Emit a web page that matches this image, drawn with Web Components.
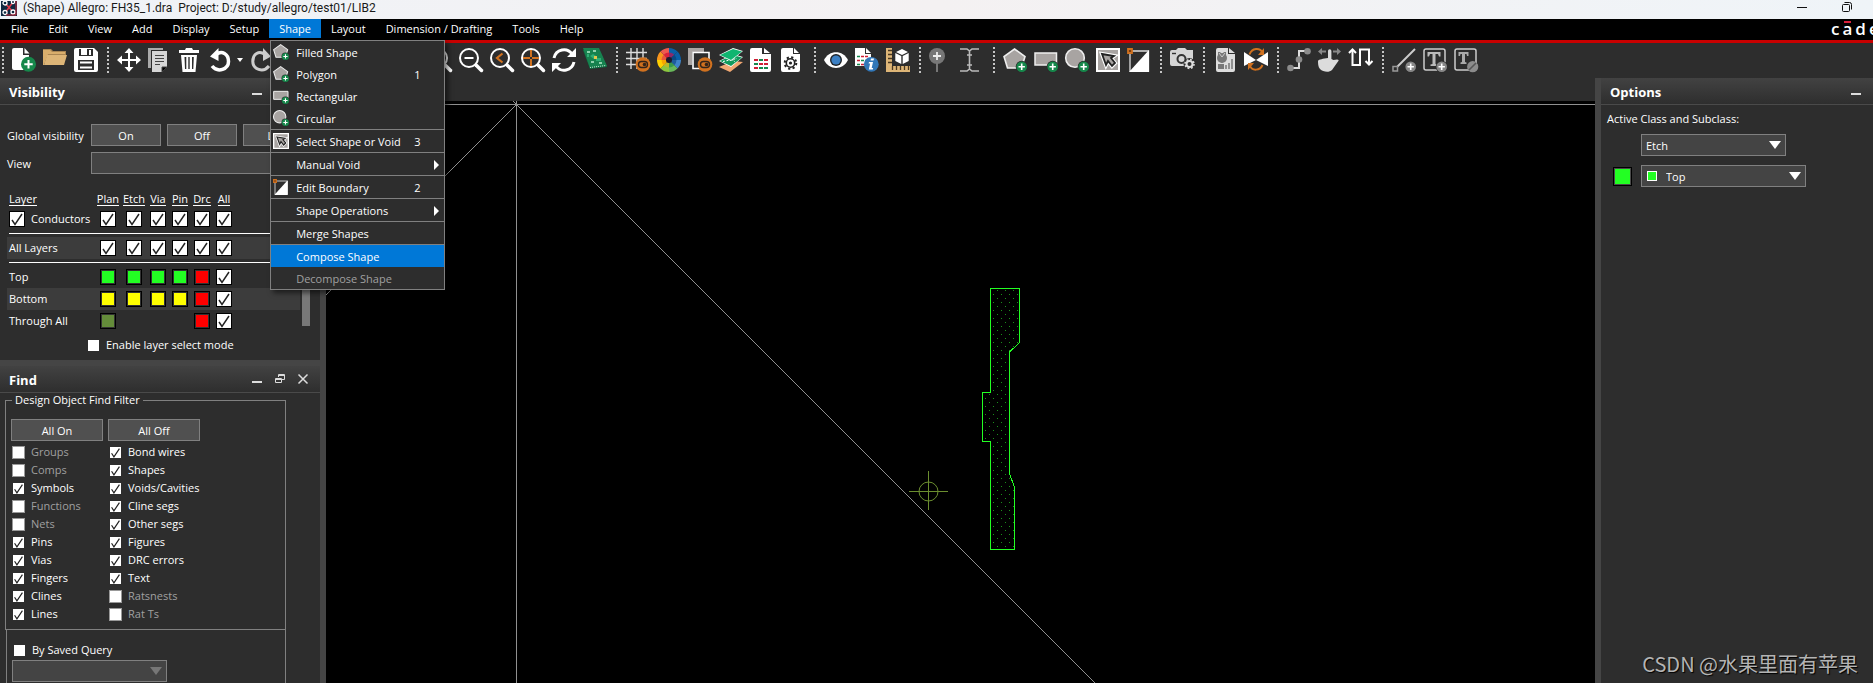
<!DOCTYPE html>
<html lang="en">
<head>
<meta charset="utf-8">
<title>Allegro</title>
<style>
html,body{height:100%;margin:0}
body{background:#2d2d2d;color:#fff;font:11px/16px "Open Sans","Noto Sans",sans-serif;overflow:hidden}
</style>
</head>
<body>
<allegro-app></allegro-app>
<script>
const plus=(c='#16884b')=>`<circle cx="18.7" cy="18.7" r="6" fill="#2d2d2d"/><circle cx="18.7" cy="18.7" r="5.3" fill="${c}"/><path d="M18.7 15.5v6.4M15.5 18.7h6.4" stroke="#fff" stroke-width="1.6"/>`;
const lens='<circle cx="10" cy="10" r="9" fill="none" stroke="#fff" stroke-width="2"/><path d="M17 17l5.500 5.500" stroke="#fff" stroke-width="3.500" stroke-linecap="round"/>';
const toggle='<circle cx="17" cy="16.500" r="7.300" fill="#d0711f"/><rect x="12.500" y="13.500" width="9" height="6" rx="3" fill="none" stroke="#33241a" stroke-width="1.400"/><circle cx="18.500" cy="16.500" r="1.800" fill="#33241a"/>';
const sector=(a,c,r1=5,r2=12)=>{const p=(r,d)=>{const t=d*Math.PI/180;return (12+r*Math.cos(t)).toFixed(2)+' '+(12+r*Math.sin(t)).toFixed(2)};
  return `<path fill="${c}" d="M${p(r1,a)}L${p(r2,a)}A${r2} ${r2} 0 0 1 ${p(r2,a+45)}L${p(r1,a+45)}A${r1} ${r1} 0 0 0 ${p(r1,a)}z"/>`};
const wheel=['#3f84c8','#69b85a','#8cc63f','#ffcf00','#f7941d','#ed5a4f','#0a5fa8','#0a5fa8'];
const wheelIn=['#1f5c9c','#3a9a4a','#b8b82e','#f7a600','#e8563a','#d8203c','#8a2a6a','#0a4a86'];
const ICONS={
new:'<path fill="#fff" d="M2 0h9v7h6v15H2a2 2 0 0 1-2-2V2a2 2 0 0 1 2-2z"/><path fill="#fff" d="M12.500 0l5 5.500h-5z"/><circle cx="16.500" cy="16.200" r="7.500" fill="#16884b"/><path d="M16.500 12v8.400M12.300 16.200h8.400" stroke="#fff" stroke-width="2"/>',
open:'<path fill="#a98552" d="M0 1h8l2 2h13v5H0z"/><path fill="#d9ae6c" d="M0 2h7l2 2h13v2H5L1 17H0z"/><path fill="#ddb577" d="M4 7h20l-3 10H1z"/>',
save:'<path fill="#fff" fill-rule="evenodd" d="M2 0h18l4 4v18a2 2 0 0 1-2 2H2a2 2 0 0 1-2-2V2a2 2 0 0 1 2-2zM5 1v7h14V1zM4 12v10h16V12z"/><path fill="#fff" d="M7 1h6v6H7z"/><path stroke="#fff" stroke-width="2" d="M6 14.500h12M6 19.500h12"/><path fill="#fff" d="M15 2h2v5h-2z"/>',
move:'<path stroke="#fff" stroke-width="2" d="M12 3v18M3 12h18"/><path fill="#fff" d="M12 0l4.500 5h-9zM12 24l4.500-5h-9zM0 12l5-4.500v9zM24 12l-5-4.500v9z"/>',
copy:'<path fill="#aaa" d="M0 0h15v2H3v18H0z"/><path fill="#d6d6d6" d="M4 3h15v16l-5 5H4z"/><path stroke="#444" d="M7 7.500h9M7 10.500h9M7 13.500h9M7 16.500h5M14 24v-5h5"/>',
trash:'<path fill="#fff" fill-rule="evenodd" d="M7 0h6l1 2h6v3H0V2h6zM2 7h16l-1.500 17h-13zM5.500 9l.5 12h1.300V9zM9.300 9v12h1.400V9zM13 9v12h1.300l.5-12z"/>',
undo:'<path d="M6 6.500C12 2 18.500 6 18.500 13.500S8 25.500 2 18" fill="none" stroke="#fff" stroke-width="3.500"/><path fill="#fff" d="M0 8.500L8.500 0v13z"/>',
redo:'<path d="M14 6.500C8 2 1.800 6 1.800 13.500S12 25.500 18 18" fill="none" stroke="#ccc" stroke-width="3"/><path fill="#ccc" d="M20 8.500L12 0v13z"/>',
zoomin:lens+'<path stroke="#fff" stroke-width="2" d="M5.500 10h9M10 5.500v9"/>',
zoomfit:lens+'<path stroke="#fff" fill="none" stroke-width="2" d="M6 7h8v6H6z"/>',
zoomout:lens+'<path stroke="#fff" stroke-width="2" d="M5.500 10h9"/>',
zoomprev:lens+'<path stroke="#d0711f" stroke-width="2.200" fill="none" d="M12.500 5.500L7 10l5.500 4.500"/>',
zoomcenter:lens+'<path stroke="#d0711f" stroke-width="2" d="M10 2v7M10 11v7M2 10h7M11 10h7"/>',
refresh:'<path fill="none" stroke="#fff" stroke-width="3" d="M2 10C4 1 15-1 20 6M22 14c-2 9-13 11-18 4"/><path fill="#fff" d="M24 0v9h-9zM0 24v-9h9z"/>',
board:'<path fill="#0f6b41" d="M0 2l16-1 8 18-17 2z"/><path fill="#17824f" d="M0 0h16l8 18-17 2z"/><path fill="#8fd0ac" d="M4 3h3v2H4zM10 2h3v2h-3zM8 13h3v2H8zM16 14h3v2h-3z"/><path fill="#2fae74" d="M7 8l3-2 3 2-2 3zM13 10h5v3h-5zM4 6h2v3H4z"/><path fill="#e5c64b" d="M11 8h3v3h-3z"/><path stroke="#c8e8d8" stroke-dasharray="1 1" d="M7 19.500l16-2"/>',
grid:'<path stroke="#ddd" stroke-width="1.400" d="M5 0v21M11 0v21M17 0v10M0 4.500h21M0 10.500h21M0 16.500h11"/>'+toggle,
colors:wheel.map((c,i)=>sector(i*45,c)).join('')+wheelIn.map((c,i)=>sector(i*45,c,2.5,7.5)).join('')+'<circle cx="12" cy="12" r="3" fill="#1c1c2c"/>',
shadow:'<path fill="#aaa5a3" d="M0 0h16v4H4v13H0z"/><path fill="none" stroke="#fff" stroke-width="1.600" d="M5 4.500h16v16H5z"/>'+toggle,
layers:'<path fill="#f1a873" d="M0 19l14-6 10 1-13 10z"/><path fill="#fff" d="M0 13l14-7 10 3-12 10z"/><path fill="#109a5c" d="M1 13l13-6 9 2.500-11 8.500z"/><path stroke="#fff" stroke-dasharray="2 1.500" d="M4 13.500l14-3M10 9l6 5"/><path fill="#fff" d="M0 7l14-7 10 3-12 10z"/><path fill="#10b570" d="M1 7l13-6 9 2.500L12 12z"/>',
report:'<path fill="#fff" d="M2 0h10v6h9v16a2 2 0 0 1-2 2H2a2 2 0 0 1-2-2V2a2 2 0 0 1 2-2z"/><path fill="#fff" d="M14 0l6 5h-6z"/><path stroke="#ce1e34" stroke-width="2.200" stroke-dasharray="4 1" d="M4 12h4M14 12h4M9 16h9M4 20h4"/><path stroke="#14894d" stroke-width="2.200" stroke-dasharray="4 1" d="M9 12h4M4 16h4M9 20h9"/>',
docgear:'<path fill="#fff" d="M2 0h10v6h7v16a2 2 0 0 1-2 2H2a2 2 0 0 1-2-2V2a2 2 0 0 1 2-2z"/><path fill="#fff" d="M13 0l5 5h-5z"/><circle cx="9.500" cy="15" r="4.200" fill="none" stroke="#222" stroke-width="1.600"/><circle cx="9.500" cy="15" r="5.800" fill="none" stroke="#222" stroke-width="2" stroke-dasharray="2.200 2.350"/><circle cx="9.500" cy="15" r="1.600" fill="#222"/>',
eye:'<path fill="#fff" d="M0 12C5 1.500 19 1.500 24 12 19 22.500 5 22.500 0 12z"/><circle cx="12" cy="12" r="6" fill="#202428"/><circle cx="12" cy="12" r="4.600" fill="#3c80c4"/>',
info:'<path fill="#fff" d="M0 0h10v6h6v12H0z"/><path fill="#fff" d="M11 0l5 5h-5z"/><path stroke="#14894d" stroke-width="1.500" stroke-dasharray="3 1" d="M2 8.500h3M6 12.500h8M2 16.500h3"/><path stroke="#ce1e34" stroke-width="1.500" stroke-dasharray="3 1" d="M6 8.500h7M2 12.500h3M6 16.500h3"/><circle cx="16.300" cy="16.300" r="7.400" fill="#3177b8"/><path fill="#fff" d="M16 10.500h3l-.5 2h-3zM14 14h4l-1.300 6h1.500l-.4 1.500h-4l1.300-6h-1.500z"/>',
ruler:'<path fill="#ddb577" d="M0 0h6v18h18v6H0z"/><path stroke="#4a3820" stroke-width="1.300" d="M2 2.500h4M2 6.500h4M2 10.500h4M2 14.500h4M6.500 18v4M10.500 18v4M14.500 18v4M18.500 18v4M22.500 18v4"/><path fill="#fff" d="M16 1l6 3-6 3-6-3zM9.300 5l6 3v8l-6-3zM22.700 5v8l-6 3V8z"/>',
pin:'<circle cx="8" cy="8" r="8" fill="#777"/><path stroke="#777" stroke-width="2" d="M8 14v10"/><path stroke="#eee" stroke-width="1.800" d="M8 4v8M4 8h8"/>',
ibeam:'<path fill="none" stroke="#bbb" stroke-width="1.600" d="M0 1h7l2.500 2L12 1h7M9.500 3v18M0 23h7l2.500-2 2.500 2h7M7 7h5M7 17h5"/>',
polygon:'<path fill="#a8a4a2" stroke="#eee" stroke-width="1.600" d="M11.500 1L22 8.500 18.500 20H4.500L1 8.500z"/>'+plus(),
rect:'<path fill="#a8a4a2" stroke="#eee" stroke-width="1.500" d="M1 5h21.500v12H1z"/>'+plus(),
circle:'<circle cx="10" cy="10" r="9.300" fill="#a8a4a2" stroke="#eee" stroke-width="1.600"/>'+plus(),
select:'<path fill="#a8a4a2" stroke="#fff" stroke-width="2" d="M1 1h22v22H1z"/><path fill="#a8a4a2" stroke="#fff" stroke-width="4" d="M6 6l12 2-3 2 4 5-3 3-4-5-2 4z"/><path fill="#a8a4a2" stroke="#222" stroke-width="1.800" d="M6 6l12 2-3 2 4 5-3 3-4-5-2 4z"/>',
edit:'<path fill="none" stroke="#ddd" stroke-width="1.300" d="M3 3h18.500v20H3z"/><path fill="#fff" d="M22 2v22H2z"/><path fill="#7a3c10" stroke="#d0711f" stroke-width="1.800" d="M1 1h4v4H1z"/>',
camera:'<path fill="#d5d5d5" d="M6 2l2-2h7l2 2h6v16H2a2 2 0 0 1-2-2V4a2 2 0 0 1 2-2z"/><path stroke="#333" stroke-width="1.400" d="M2 5.500h4"/><circle cx="11.500" cy="11" r="4" fill="none" stroke="#333" stroke-width="2"/><circle cx="19.500" cy="16" r="6" fill="#2d2d2d"/><circle cx="19.500" cy="16" r="3" fill="none" stroke="#ddd" stroke-width="2"/><circle cx="19.500" cy="16" r="4.500" fill="none" stroke="#ddd" stroke-width="1.600" stroke-dasharray="1.800 1.730"/>',
chart:'<path fill="#ddd" d="M5 0h10v6h7v16a2 2 0 0 1-2 2H5a2 2 0 0 1-2-2V2a2 2 0 0 1 2-2zM16 0l6 5h-6z"/><path fill="#777" d="M5 4h2l2 2 2-2h2v7l-4 4-4-4z"/><circle cx="9" cy="10" r="5" fill="#777"/><path fill="#777" d="M5 16h6v5H5z"/><path stroke="#777" stroke-width="1.500" d="M13 21v-4M16 21v-6M19 21V11"/><path fill="none" stroke="#ccc" d="M6 5l3 4 3-4"/>',
flip:'<path fill="#fff" d="M0 4l12 8L0 18zM24 4l-12 8 12 6z"/><path fill="none" stroke="#d0711f" stroke-width="2" d="M5.500 6.500C8-.5 16-.5 18.500 4.500M18.500 17C16 23 8 23 6 18"/><path fill="#d0711f" d="M20 0v7h-6zM4 22v-7h6z"/>',
route:'<path fill="none" stroke="#ddd" stroke-width="2" d="M3 20h9V3h9"/><g fill="#8c8c8c"><circle cx="3.500" cy="20" r="3.300"/><circle cx="12" cy="11.500" r="3.300"/><circle cx="20.500" cy="3.300" r="3.300"/></g>',
hand:'<path fill="#dcdcdc" d="M10 3a1.700 1.700 0 0 1 3.400 0v8l2 1 3.600-.500c2 0 2 1 1 2L14 22c-3 3-9 2-12-1-2-2-2-6-2-8 1-2 5-2 10-3z"/><path fill="#888" d="M0 3.500L4 0v2.500h4v2H4V7zM23 3.500L19 0v2.500h-4v2h4V7z"/>',
snake:'<path fill="none" stroke="#fff" stroke-width="2" d="M3.500 2v15H11V1.500h9V16"/><path fill="none" stroke="#fff" stroke-width="2" d="M0 5l3.500-3.500L7 5M16.500 13l3.500 3.500 3.500-3.500"/>',
line:'<path stroke="#ccc" stroke-width="2" d="M4 20L23 1"/><path fill="#2d2d2d" stroke="#999" stroke-width="1.500" d="M1 18.500h4.500V23H1z"/>'+plus('#888'),
text:'<rect x="1" y="1" width="21" height="21" rx="2" fill="none" stroke="#ccc" stroke-width="1.500"/><path fill="#bbb" d="M4.500 4h13v4.500H16L15 6h-2.500v10l2 .500V18h-7v-1.500l2-.500V6H7L6 8.500H4.500z"/>'+plus('#888'),
textedit:'<rect x="1" y="1" width="21" height="21" rx="2" fill="none" stroke="#ccc" stroke-width="1.500"/><path fill="#aaa" d="M4.500 4h10v4H13l-.500-2H11v8l1.500.500V16h-6v-1.500L8 14V6H6.500L6 8H4.500z"/><circle cx="18.700" cy="18.700" r="5.600" fill="#8c8c8c"/><path stroke="#555" stroke-width="1.600" d="M15 22l7-7"/>'
};
const CHECK=`url("data:image/svg+xml,%3Csvg xmlns='http://www.w3.org/2000/svg' viewBox='0 0 14 14'%3E%3Cpath d='M2 8l3 4.500L12 2' fill='none' stroke='%23222' stroke-width='1.5'/%3E%3C/svg%3E")`;
const RESET=`*{box-sizing:border-box}button,select,input{font:inherit;color:inherit;margin:0;padding:0;border:0;border-radius:0;background:none;appearance:none}
input[type=checkbox]{display:block;flex:none;width:11px;height:11px;background:#fff}
input[type=checkbox]:checked{background:#fff ${CHECK} center/11px no-repeat}`;

class Part extends HTMLElement{
  connectedCallback(){
    if(this.shadowRoot)return;
    const t=document.createElement('template');
    t.innerHTML=`<style>${RESET}${this.css()}</style>${this.html()}`;
    this.attachShadow({mode:'open'}).append(document.importNode(t.content,true));
  }
  css(){return ''}
  attr(n){return this.getAttribute(n)||''}
}
const define=(name,css,html)=>customElements.define(name,class extends Part{
  css(){return css}
  html(){return typeof html==='function'?html(this):html}
});

define('ui-icon',':host{display:block;width:var(--icon,24px);height:var(--icon,24px)}svg{display:block;width:100%;height:100%;overflow:visible}',
  e=>`<svg viewBox="0 0 24 24" aria-hidden="true">${ICONS[e.attr('name')]}</svg>`);

define('tool-button',`:host{display:block;flex:none}button{display:flex;align-items:center;width:24px;height:24px}
  :host([menu]) button{width:34px;gap:3px}i{border:3px solid transparent;border-top:4px solid #fff;border-bottom:0}ui-icon{flex:none}`,
  e=>`<button aria-label="${e.attr('name')}"><ui-icon name="${e.attr('name')}"></ui-icon>${e.hasAttribute('menu')?'<i></i>':''}</button>`);

define('tool-grip',':host{display:flex;justify-content:center;width:5px;height:26px;flex:none}i{width:2px;background:repeating-linear-gradient(#c4c4c4 0 2px,transparent 2px 4px)}','<i></i>');

const TOOLS=['new open save','move copy trash undo* redo*','zoomin zoomfit zoomin zoomfit zoomin zoomout zoomprev zoomcenter refresh board','grid colors shadow layers report docgear','eye info ruler','pin ibeam','polygon rect circle select edit','camera','chart flip','route hand snake','line text textedit'];
define('tool-bar',':host{display:flex;align-items:center;gap:7px;height:35px;padding-bottom:1px;background:#2d2d2d;overflow:hidden}',
  ()=>TOOLS.map(g=>'<tool-grip></tool-grip>'+g.split(' ').map(n=>`<tool-button name="${n.replace('*','')}"${n.endsWith('*')?' menu':''}></tool-button>`).join('')).join(''));

define('title-bar',`:host{display:flex;align-items:center;height:19px;overflow:hidden;background:linear-gradient(90deg,#eff3f8,#f4f1f2 50%,#eff4f8);color:#1a1a1a;font:12px/16px Roboto,"Open Sans",sans-serif;padding:0 20px 0 1px}
  svg{display:block;flex:none}.t{flex:1;margin:0 0 3px 6px;white-space:pre}.w{display:flex;gap:33px;margin-bottom:5px}`,
  `<svg width="16" height="18" viewBox="0 0 16 18"><rect y="-2" width="16" height="17" fill="#0d2740"/><path d="M4 2l8 9M12 1L4 12" stroke="#e03a4a" stroke-width="1.500"/><g fill="#0d2740" stroke="#fff" stroke-width="1.300"><circle cx="4" cy="2" r="2"/><circle cx="12" cy="1" r="1.600"/><circle cx="4" cy="11.500" r="2"/><circle cx="12" cy="11" r="2"/></g><path d="M15 0v14H5" fill="none" stroke="#d02a3a"/></svg>
  <span class="t">(Shape) Allegro: FH35_1.dra  Project: D:/study/allegro/test01/LIB2</span>
  <span class="w"><button aria-label="Minimize"><svg width="12" height="12"><path d="M1 6.500h10" stroke="#111"/></svg></button>
  <button aria-label="Restore"><svg width="12" height="12" fill="none" stroke="#111"><rect x="1.500" y="3.500" width="7" height="7" rx="1"/><path d="M3.500 1.500h5a2 2 0 0 1 2 2v5"/></svg></button></span>`);

const MENU=[['Filled Shape','polygon'],['Polygon','polygon','1'],['Rectangular','rect'],['Circular','circle'],0,['Select Shape or Void','select','3'],0,['Manual Void','','>'],0,['Edit Boundary','edit','2'],0,['Shape Operations','','>'],0,['Merge Shapes'],0,['Compose Shape','','','on'],['Decompose Shape','','','off']];
define('menu-popup',`:host{display:block;width:175px;background:#2d2d2d;border:1px solid #808080;box-shadow:3px 3px 5px #0008;--icon:16px}
  button{display:grid;grid-template-columns:16px 1fr 14px 16px;align-items:center;width:100%;height:22px;padding:1px 0 0 2px;text-align:left;line-height:22px}
  ui-icon{align-self:start;margin-top:2px}
  .l{padding-left:7px;white-space:nowrap}.on{background:#0078d7}.off{color:#a0a0a0}hr{border:0;height:1px;margin:0;background:#808080}
  .a{justify-self:end;margin-right:5px;border:5px solid transparent;border-left-color:#fff;border-right:0}`,
  ()=>MENU.map(m=>m?`<button role="menuitem" class="${m[3]||''}">${m[1]?`<ui-icon name="${m[1]}"></ui-icon>`:'<span></span>'}<span class="l">${m[0]}</span><span>${m[2]&&m[2]!=='>'?m[2]:''}</span>${m[2]==='>'?'<i class="a"></i>':''}</button>`:'<hr>').join(''));

define('cadence-logo',`:host{display:flex;gap:3px;flex:none;font-size:17px;line-height:20px;font-weight:600;width:42px}
  .a{position:relative}.a::before{content:"";position:absolute;left:2px;right:1px;top:2px;height:2px;background:#d8203c}`,
  '<span>c</span><span class="a">a</span><span>d</span><span>e</span>');

define('menu-bar',`:host{display:flex;position:relative;z-index:5;height:24px;background:#000;border-bottom:3px solid #c80000}
  nav{display:flex;flex:1;padding-left:1px}.i{position:relative}.i>button{height:19px;padding:0 10px;line-height:19px;white-space:nowrap;display:block}.on{background:#0078d7}
  menu-popup{position:absolute;left:1px;top:21px}`,
  ()=>`<nav>${['File','Edit','View','Add','Display','Setup','Shape','Layout','Dimension / Drafting','Tools','Help'].map(n=>`<div class="i"><button class="${n==='Shape'?'on':''}">${n}</button>${n==='Shape'?'<menu-popup></menu-popup>':''}</div>`).join('')}</nav><cadence-logo></cadence-logo>`);

define('dock-panel',`:host{display:block}header{display:flex;align-items:center;height:27px;padding:0 11px 0 9px;background:linear-gradient(#424242,#2e2e2e);border-bottom:1px solid #4a4a4a}
  h2{flex:1;margin:0;padding-top:2px;font-size:13px;line-height:20px;font-weight:700}svg{display:block}.b{display:flex;gap:11px}`,
  e=>{const b=(l,p)=>`<button aria-label="${l}"><svg width="12" height="12" fill="none" stroke="#ddd">${p}</svg></button>`;
  return `<header><h2>${e.attr('heading')}</h2><span class="b">${b('Minimize','<path d="M1 9h10" stroke-width="2"/>')}${e.hasAttribute('full')?b('Float','<path d="M4.500 4V1.500h6v5H8M1.500 5.500h6v4h-6zM4 2.500h7M1 6.500h7"/>')+b('Close','<path d="M1.500 1.500l9 9M10.500 1.500l-9 9" stroke-width="1.500"/>'):''}</span></header><slot></slot>`});

define('push-button',':host{display:block}button{display:block;width:100%;height:22px;line-height:20px;padding-top:1px;background:#505050;border:1px solid #808080;text-align:center}',
  '<button><slot></slot></button>');

define('drop-down',`:host{display:block;position:relative}select{display:block;width:100%;height:22px;background:#444;border:1px solid #808080;padding:1px 4px 0;line-height:20px}
  :host([swatch]) select{padding-left:24px}i{position:absolute;right:5px;top:7px;border:6px solid transparent;border-top:8px solid #fff;border-bottom:0;pointer-events:none}
  b{position:absolute;left:6px;top:6px;width:10px;height:10px;background:#23ff23;border:1px solid #fff}:host([dim]) i{border-top-color:#777}:host([plain]) i{display:none}`,
  e=>`<select aria-label="${e.attr('label')}"><option>${e.attr('value')}</option></select><i></i>${e.hasAttribute('swatch')?'<b></b>':''}`);

define('check-line',`:host{display:block}label{display:flex;align-items:center;gap:7px;height:18px;white-space:nowrap}:host([off]){color:#a0a0a0}
  :host([off]) input{width:13px;height:13px;margin:0 -1px;border:1px solid #999}`,
  e=>`<label><input type="checkbox"${e.hasAttribute('checked')?' checked':''}${e.hasAttribute('off')?' disabled':''}><slot></slot></label>`);

const cb=l=>`<input type="checkbox" checked aria-label="${l}">`, sw=(c,l)=>c?`<button class="s" style="background:${c}" aria-label="${l} colour"></button>`:'';
const COLS=['Plan','Etch','Via','Pin','Drc','All'];
const G='#23ff23',Y='#ffff00',R='#ff0000';
const layer=(n,cs,k='')=>`<tr class="${k}"><th scope="row">${n}</th>${cs.map(c=>`<td>${sw(c,n)}</td>`).join('')}<td>${cb(n+' All')}</td><td></td></tr>`;
define('layer-table',`:host{display:block}table{width:100%;table-layout:fixed;border-collapse:collapse}td,th{padding:0;height:22px;font-weight:400;text-align:center;line-height:16px}
  th[scope=row],th:first-child{text-align:left;padding-left:2px}thead th,thead td{height:16px}thead span{border-bottom:1px solid #fff;display:inline-block;line-height:13px;height:14px;vertical-align:top}
  .alt{background:#3c3c3c}.rule td{height:7px}.rule div{height:1px;background:#fff;margin-left:2px}
  input[type=checkbox],.s{display:block;width:16px;height:16px;margin:auto;border:1px solid #000}input[type=checkbox]:checked{background-size:14px}
  .s{box-shadow:inset 0 0 0 1px #333}label{display:flex;gap:6px;align-items:center}label input[type=checkbox]{margin:0}`,
  ()=>`<table><colgroup><col style="width:88px"><col style="width:26px"><col style="width:26px"><col style="width:22px"><col style="width:22px"><col style="width:22px"><col style="width:22px"><col></colgroup>
  <thead><tr><th><span>Layer</span></th>${COLS.map(c=>`<th><span>${c}</span></th>`).join('')}<td></td></tr></thead><tbody>
  <tr><th scope="row"><label><input type="checkbox" checked>Conductors</label></th>${COLS.map(c=>`<td>${cb(c)}</td>`).join('')}<td></td></tr>
  <tr class="rule"><td colspan="8"><div></div></td></tr>
  <tr class="alt"><th scope="row">All Layers</th>${COLS.map(c=>`<td>${cb('All layers '+c)}</td>`).join('')}<td></td></tr>
  <tr class="rule"><td colspan="8"><div></div></td></tr>
  ${layer('Top',[G,G,G,G,R])}${layer('Bottom',[Y,Y,Y,Y,R],'alt')}${layer('Through All',['#648c3a','','','',R])}</tbody></table>`);

define('visibility-pane',`:host{display:block;padding:19px 9px 0 7px;height:255px}
  .g{display:grid;grid-template-columns:84px 222px;align-items:center;row-gap:6px}.g>span{padding-top:2px}
  .bt{display:grid;grid-template-columns:repeat(3,70px);gap:6px}
  .t{display:flex;gap:2px;margin-top:18px}.bar{width:8px;height:84px;margin:50px 0 6px;background:#787878}.t layer-table{flex:none;width:293px}
  check-line{margin:4px 0 0 81px}`,
  `<div class="g"><span>Global visibility</span><div class="bt"><push-button>On</push-button><push-button>Off</push-button><push-button>Last</push-button></div>
  <span>View</span><drop-down label="View" plain></drop-down></div>
  <div class="t"><layer-table></layer-table><div class="bar"></div></div><check-line>Enable layer select mode</check-line>`);

const L=['Groups-','Comps-','Symbols','Functions-','Nets-','Pins','Vias','Fingers','Clines','Lines'],Q=['Bond wires','Shapes','Voids/Cavities','Cline segs','Other segs','Figures','DRC errors','Text','Ratsnests-','Rat Ts-'];
const list=a=>a.map(n=>n.endsWith('-')?`<check-line off>${n.slice(0,-1)}</check-line>`:`<check-line checked>${n}</check-line>`).join('');
define('find-pane',`:host{display:block;padding:0 0 0 5px}.f{width:281px}fieldset{margin:0;padding:12px 5px 6px;border:1px solid #808080;min-width:0}
  legend{padding:0 3px;line-height:14px;margin-left:1px}.b{display:grid;grid-template-columns:92px 92px;gap:5px}.c{display:grid;grid-template-columns:97px 1fr;padding:2px 2px 0}
  .q{border:1px solid #808080;border-top:0;margin-left:1px;padding:11px 5px}.q check-line{margin-left:2px}.q drop-down{width:155px;margin-top:1px}`,
  ()=>`<div class="f"><fieldset><legend>Design Object Find Filter</legend><div class="b"><push-button>All On</push-button><push-button>All Off</push-button></div>
  <div class="c"><div>${list(L)}</div><div>${list(Q)}</div></div></fieldset>
  <div class="q"><check-line>By Saved Query</check-line><drop-down dim label="Saved query"></drop-down></div></div>`);

define('options-pane',`:host{display:flex;flex-direction:column;padding:6px}.r{display:grid;grid-template-columns:20px 1fr;column-gap:8px;padding-left:6px;align-items:center}
  .s{width:19px;height:19px;background:#23ff23;border:1px solid #000;box-shadow:inset 0 0 0 1px #4a4a4a}.m{margin:7px 0 9px}.e{width:145px}.w{width:165px}`,
  `<span>Active Class and Subclass:</span><div class="r m"><span></span><drop-down class="e" label="Class" value="Etch"></drop-down></div>
  <div class="r"><button class="s" aria-label="Colour"></button><drop-down class="w" swatch label="Subclass" value="Top"></drop-down></div>`);

define('design-canvas',':host{display:block;flex:1;min-height:0;background:#000;overflow:hidden}svg{display:block;width:100%;height:100%}',
  `<svg viewBox="0 0 1269 582" preserveAspectRatio="xMinYMin slice" role="img" aria-label="Board drawing"><defs><pattern id="d" width="8" height="8" patternUnits="userSpaceOnUse"><path fill="#1b8f1b" d="M3 1h1v1H3zM7 5h1v1H7z"/></pattern></defs>
  <g fill="none" stroke="#909090" shape-rendering="crispEdges"><path d="M0 3.500h1269M190.500 0v582M190.500 3.500l580 580M190.500 3.500l-192 192M187 0l7 7"/></g>
  <g shape-rendering="crispEdges"><path fill="url(#d)" stroke="#23ff23" d="M664.500 187.500h29v54l-10 9.500v122l5 13v62h-24v-108h-8v-49h8z"/>
  <path stroke="#6b8e2f" d="M602.500 370v39M583 390.500h39"/></g><circle cx="602.500" cy="390.500" r="9.500" fill="none" stroke="#6b8e2f"/></svg>`);

define('allegro-app',`:host{display:flex;flex-direction:column;height:100vh;overflow:hidden}main{display:flex;flex:1;min-height:0}
  aside{flex:none;overflow:hidden;min-height:0}.l{width:326px;border-right:6px solid #454545}.r{width:278px;border-left:6px solid #454545;display:flex;flex-direction:column}
  .sp{height:6px;background:#454545}.c{display:flex;flex-direction:column;flex:1;min-width:0;background:#2d2d2d;padding-top:23px}
  .m{margin:auto 15px 7px auto;font:20px/24px "Noto Sans CJK SC",sans-serif;color:#b4b4b4;text-shadow:1px 1px 1px #000;white-space:nowrap}`,
  `<title-bar></title-bar><menu-bar></menu-bar><tool-bar></tool-bar><main>
  <aside class="l"><dock-panel heading="Visibility" full><visibility-pane></visibility-pane></dock-panel><div class="sp"></div><dock-panel heading="Find" full><find-pane></find-pane></dock-panel></aside>
  <section class="c"><design-canvas></design-canvas></section>
  <aside class="r"><dock-panel heading="Options"><options-pane></options-pane></dock-panel><span class="m">CSDN @水果里面有苹果</span></aside></main>`);
</script>
</body>
</html>
